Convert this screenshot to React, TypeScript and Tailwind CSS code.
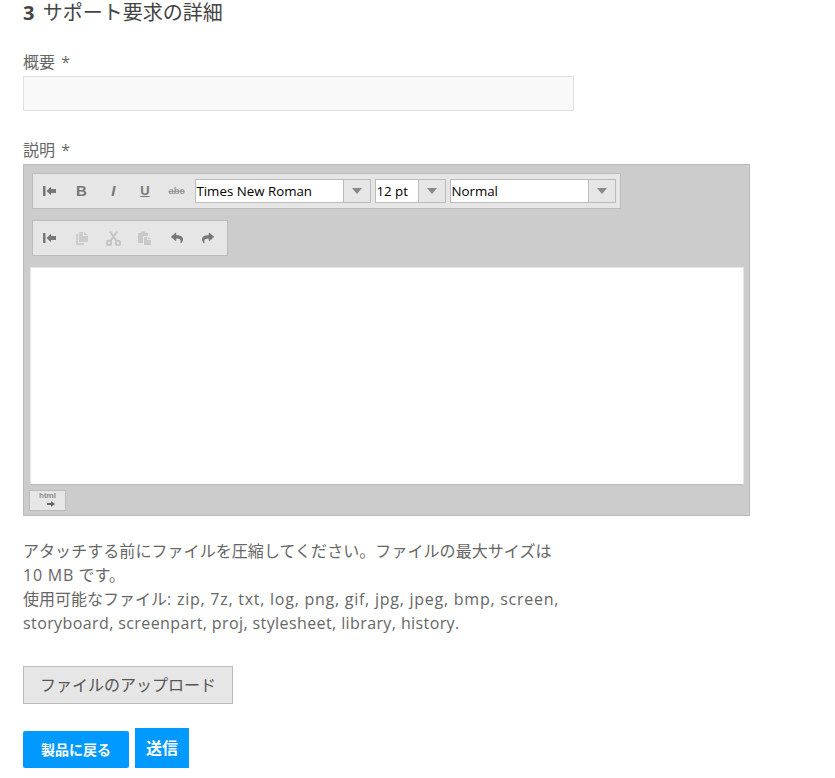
import { FaReply, FaShare } from 'react-icons/fa';

function CollapseIcon() {
  return (
    <svg width="13" height="10" viewBox="0 0 13 10" className="text-[#777777]">
      <rect x="0" y="0" width="2.5" height="10" fill="currentColor" />
      <path d="M3.5 5 L8 .8 V3 H13 V7 H8 V9.2 Z" fill="currentColor" />
    </svg>
  );
}

function CopyIcon() {
  return (
    <svg width="12" height="13" viewBox="0 0 12 13" fill="#cccccc">
      <path d="M0 2 H2 V11 H8 V13 H0 Z" />
      <path d="M3 0 H7 V4 H12 V10 H3 Z" />
      <path d="M8 0 L12 3 H8 Z" />
    </svg>
  );
}

function ScissorsIcon() {
  return (
    <svg width="15" height="15" viewBox="0 0 15 15" fill="none" stroke="#c4c4c4" strokeWidth="2">
      <circle cx="3" cy="12" r="2.2" />
      <circle cx="12" cy="12" r="2.2" />
      <path d="M4.4 10 L11 0.5 M10.6 10 L4 0.5" />
    </svg>
  );
}

function PasteIcon() {
  return (
    <svg width="13" height="14" viewBox="0 0 13 14" fill="#c8c8c8">
      <path d="M0 2 H3 V0.5 H7 V2 H10 V5 H5 V12 H0 Z" />
      <path d="M6 6 H9 V9 H13 V14 H6 Z" />
      <path d="M10 6 L13 8 H10 Z" />
    </svg>
  );
}

function ToolButton({ children }: { children: React.ReactNode }) {
  return <div className="flex h-[32px] w-[31.7px] items-center justify-center">{children}</div>;
}

function Dropdown({ label, textWidth }: { label: string; textWidth: string }) {
  return (
    <div className="flex h-[24px] border border-[#bbbbbb]">
      <div className={`${textWidth} bg-white text-[13.3px] leading-[22px] text-black`}>{label}</div>
      <div className="flex w-[27px] items-center justify-center border-l border-[#bbbbbb] bg-[#e6e6e6]">
        <div className="h-0 w-0 border-x-[5px] border-t-[6px] border-x-transparent border-t-[#888888]" />
      </div>
    </div>
  );
}

export default function App() {
  return (
    <div className="h-[778px] w-[835px] overflow-hidden bg-white pl-[23px] font-['Open_Sans','Noto_Sans_CJK_JP',sans-serif] text-[#666666]">
      <h2 className="pt-[1px] text-[20px] leading-[24px] text-[#444444]">
        <b className="mr-[3px] font-bold">3</b> サポート要求の詳細
      </h2>

      <label className="mt-[25px] mb-[2px] block text-[16px] leading-[24px]">
        概要 <span className="ml-[2px]">*</span>
      </label>
      <input className="block h-[35px] w-[551px] border border-[#e0e0e0] bg-[#f9f9f9]" />

      <label className="mt-[27px] block text-[16px] leading-[24px]">
        説明 <span className="ml-[2px]">*</span>
      </label>
      <div className="mt-[2px] h-[352px] w-[727px] border border-[#bbbbbb] bg-[#cccccc] pl-[6px]">
        <div className="ml-[2px] mt-[8px] flex h-[36px] w-[589px] items-center border border-[#bbbbbb] bg-[#e6e6e6] pl-[1px]">
          <ToolButton><CollapseIcon /></ToolButton>
          <ToolButton><span className="font-['Liberation_Sans',sans-serif] text-[15px] font-bold text-[#777777]">B</span></ToolButton>
          <ToolButton><span className="font-['Liberation_Sans',sans-serif] text-[15px] font-bold italic text-[#777777]">I</span></ToolButton>
          <ToolButton><span className="font-['Liberation_Sans',sans-serif] text-[13px] font-bold text-[#777777] underline">U</span></ToolButton>
          <ToolButton><span className="font-['Liberation_Sans',sans-serif] text-[9.5px] font-bold text-[#999999] line-through">abc</span></ToolButton>
          <div className="ml-[3px] flex items-center gap-[4px]">
            <Dropdown label="Times New Roman" textWidth="w-[147px]" />
            <Dropdown label="12 pt" textWidth="w-[42px]" />
            <Dropdown label="Normal" textWidth="w-[137px]" />
          </div>
        </div>
        <div className="ml-[2px] mt-[11px] flex h-[36px] w-[196px] items-center border border-[#bbbbbb] bg-[#e6e6e6] pl-[1px]">
          <ToolButton><CollapseIcon /></ToolButton>
          <ToolButton><CopyIcon /></ToolButton>
          <ToolButton><ScissorsIcon /></ToolButton>
          <ToolButton><PasteIcon /></ToolButton>
          <ToolButton><FaReply size={12} className="text-[#777777]" /></ToolButton>
          <ToolButton><FaShare size={12} className="text-[#777777]" /></ToolButton>
        </div>
        <div className="mt-[11px] h-[218px] w-[714px] border border-[#e6e6e6] border-b-[#bbbbbb] bg-white" />
        <div className="ml-[-1px] mt-[5px] flex h-[21px] w-[37px] flex-col items-center border border-[#bbbbbb] bg-[#e6e6e6] font-['Liberation_Sans',sans-serif]">
          <span className="text-[8px] font-bold leading-[10px] text-[#8f8a8c]">html</span>
          <svg width="8" height="6" viewBox="0 0 8 6" className="ml-[6px]">
            <path d="M0 2 H4 V0 L8 3 L4 6 V4 H0 Z" fill="#666666" />
          </svg>
        </div>
      </div>

      <div className="mt-[23px] text-[16px] leading-[24px]">
        <p className="w-[535px] tracking-[0.06px]">
          アタッチする前にファイルを圧縮してください。ファイルの最大サイズは <span className="tracking-[0.8px]">10 MB</span> です。
        </p>
        <p className="w-[540px]">
          使用可能なファイル<span className="tracking-[0.75px]">: zip, 7z, txt, log, png, gif, jpg, jpeg, bmp, screen,</span>
          <br />
          <span className="tracking-[0.4px]">storyboard, screenpart, proj, stylesheet, library, history.</span>
        </p>
      </div>

      <button className="mt-[31px] block h-[38px] w-[210px] border border-[#bbbbbb] bg-[#e6e6e6] text-[16px] text-[#555555]">
        ファイルのアップロード
      </button>

      <div className="mt-[24px] flex items-end gap-[6px]">
        <button className="h-[37px] w-[106px] rounded-[2px] bg-[#0099ff] text-[14px] font-bold text-white">製品に戻る</button>
        <button className="h-[40px] w-[54px] bg-[#0099ff] text-[16px] font-bold text-white">送信</button>
      </div>
    </div>
  );
}
